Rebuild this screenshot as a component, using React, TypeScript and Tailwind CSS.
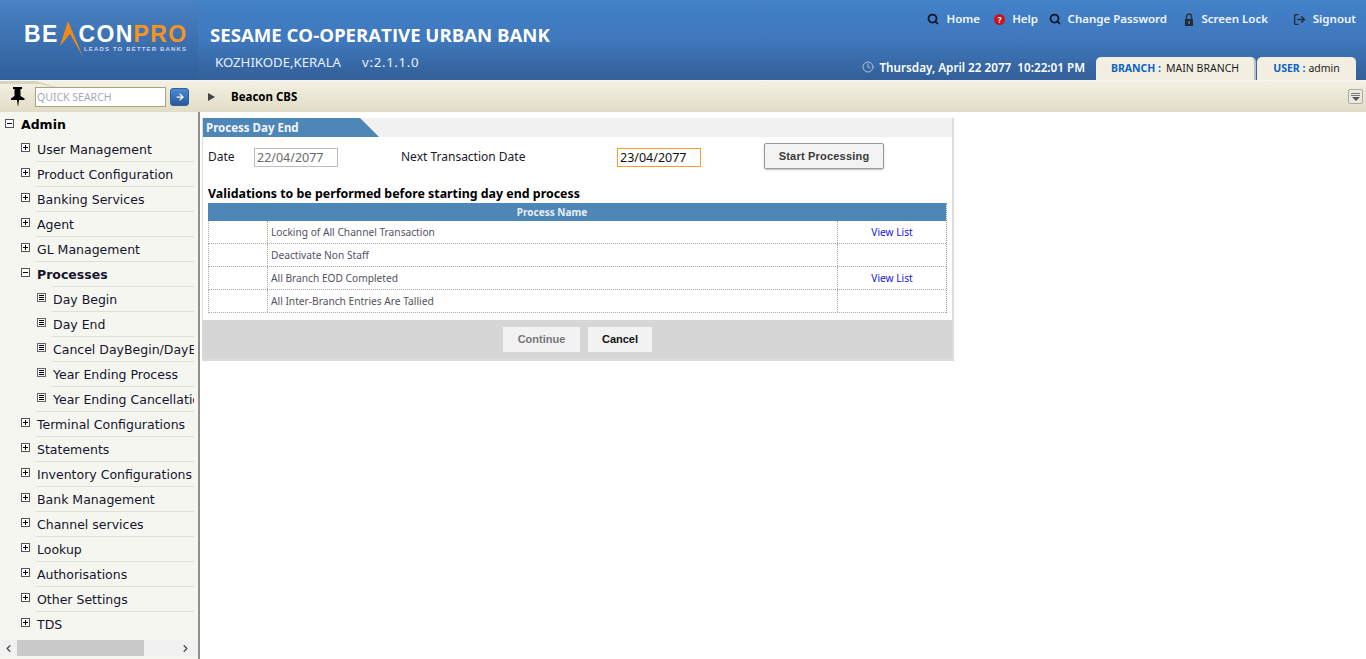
import React from 'react';
import { Search, LogOut, Clock, ArrowRight, ChevronLeft, ChevronRight } from 'lucide-react';

const tahoma = 'font-["Noto_Sans","DejaVu_Sans",sans-serif]';

const links = [
  { label: 'Home', icon: 'search', w: 'w-[66px]' },
  { label: 'Help', icon: 'help', w: 'w-[58px]' },
  { label: 'Change Password', icon: 'search', w: 'w-[129px]' },
  { label: 'Screen Lock', icon: 'lock', w: 'w-[101px]' },
  { label: 'Signout', icon: 'out', w: 'w-[88px]' },
];

const menu = [
  { label: 'User Management' },
  { label: 'Product Configuration' },
  { label: 'Banking Services' },
  { label: 'Agent' },
  { label: 'GL Management' },
  { label: 'Processes', open: true },
  { label: 'Day Begin', leaf: true },
  { label: 'Day End', leaf: true },
  { label: 'Cancel DayBegin/DayEnd', leaf: true },
  { label: 'Year Ending Process', leaf: true },
  { label: 'Year Ending Cancellation', leaf: true },
  { label: 'Terminal Configurations' },
  { label: 'Statements' },
  { label: 'Inventory Configurations' },
  { label: 'Bank Management' },
  { label: 'Channel services' },
  { label: 'Lookup' },
  { label: 'Authorisations' },
  { label: 'Other Settings' },
  { label: 'TDS' },
];

const rows = [
  { name: 'Locking of All Channel Transaction', link: true },
  { name: 'Deactivate Non Staff', link: false },
  { name: 'All Branch EOD Completed', link: true },
  { name: 'All Inter-Branch Entries Are Tallied', link: false },
];

const TreeBox = ({ open }: { open?: boolean }) => (
  <svg width="9" height="9" viewBox="0 0 9 9" className="shrink-0">
    <rect x="0.5" y="0.5" width="8" height="8" fill="#fff" stroke="#555" />
    <path d="M2 4.5h5" stroke="#000" />
    {!open && <path d="M4.5 2v5" stroke="#000" />}
  </svg>
);

const LeafBox = () => (
  <svg width="9" height="9" viewBox="0 0 9 9" className="shrink-0">
    <rect x="0.5" y="0.5" width="8" height="8" fill="#f4f4f4" stroke="#666" />
    <path d="M2 2.5h5M2 4.5h5M2 6.5h5" stroke="#000" />
  </svg>
);

const LockIcon = () => (
  <svg width="10" height="13" viewBox="0 0 10 13">
    <path d="M2.5 6V3.5a2.5 2.5 0 0 1 5 0V6" fill="none" stroke="#2a3340" strokeWidth="1.5" />
    <rect x="1" y="6" width="8" height="7" fill="#222b38" />
    <rect x="4" y="8" width="2" height="3" fill="#5a6a7d" />
  </svg>
);

const PinIcon = () => (
  <svg width="16" height="19" viewBox="0 0 16 19">
    <path d="M3 0h9v2h-1.5v7L14.5 11.5V13H9l-.8 6h-.4L7 13H1v-1.5L4.5 9V2H3z" fill="#000" />
  </svg>
);

const LinkIcon = ({ type }: { type: string }) => {
  if (type === 'help')
    return (
      <span className="w-[11px] h-[11px] rounded-full bg-[#c8141e] text-white text-[8px] font-bold leading-[11px] text-center">?</span>
    );
  if (type === 'lock') return <LockIcon />;
  if (type === 'out') return <LogOut size={13} strokeWidth={2.5} className="text-[#222b38]" />;
  return <Search size={12} strokeWidth={3.5} className="text-[#0c1420]" />;
};

const App = () => {
  return (
    <div className={`w-[1366px] h-[659px] overflow-hidden flex flex-col bg-white ${tahoma}`}>
      {/* top banner */}
      <header className="h-[80px] shrink-0 flex bg-gradient-to-b from-[#4381c9] via-[#3f78bd] to-[#325f98] text-white">
        <div className="w-[198px] shrink-0 bg-gradient-to-b from-[#4a82c5] to-[#2f5f9b] flex items-start pl-[24px] pt-[20px]">
          <div className="relative w-[165px] h-[40px]">
            <span className="font-['Liberation_Sans',sans-serif] font-bold text-[23px] leading-[28px] tracking-[1.3px] whitespace-nowrap">
              BE<span className="inline-block w-[20px]" />CON<span className="text-[#f7941d]">PRO</span>
            </span>
            <svg width="26" height="38" viewBox="0 0 26 38" className="absolute left-[34px] top-0">
              <path d="M10 1 L25 37 L12 14 L2 26 Z" fill="#f28a1a" />
            </svg>
            <span className="absolute left-[60px] top-[25px] text-[6px] leading-[8px] tracking-[1.15px] font-bold text-[#c7d7ea] whitespace-nowrap font-['Liberation_Sans',sans-serif]">
              LEADS TO BETTER BANKS
            </span>
          </div>
        </div>
        <div className="flex-1 flex flex-col relative">
          <div className="flex justify-between">
            <div className="pl-[12px] pt-[23px]">
              <h1 className="font-['Open_Sans',sans-serif] font-bold text-[18.6px] leading-[24px] whitespace-nowrap">SESAME CO-OPERATIVE URBAN BANK</h1>
              <div className="pl-[5px] pt-[6px] flex gap-[21px] text-[13.2px] leading-[18px] text-[#e6f2ff]">
                <span>KOZHIKODE,KERALA</span>
                <span className="tracking-[0.7px]">v:2.1.1.0</span>
              </div>
            </div>
            <nav className="flex pt-[11px] pr-[10px] h-fit">
              {links.map((l) => (
                <div key={l.label} className={`${l.w} flex items-center justify-end gap-[7px] text-[11.5px] leading-[16px] font-semibold text-[#f1f6fc] whitespace-nowrap`}>
                  <LinkIcon type={l.icon} />
                  <span>{l.label}</span>
                </div>
              ))}
            </nav>
          </div>
          <div className="absolute right-[10px] bottom-0 flex items-end">
            <div className="flex items-center gap-[5px] mr-[11px] mb-[5px] text-[11.7px] leading-[16px] font-semibold whitespace-nowrap">
              <Clock size={12} className="text-[#a8c4e4]" />
              <span>Thursday, April 22 2077&nbsp; 10:22:01 PM</span>
            </div>
            <div className="w-[160px] h-[23px] bg-[#f2efe2] rounded-t-[5px] flex items-center justify-center gap-[5px] text-[10.5px] text-[#1b1b1b] mr-[1px] border-r-2 border-[#b9c0c8]">
              <b className="text-[#0b63c5] font-bold">BRANCH :</b> MAIN BRANCH
            </div>
            <div className="w-[99px] h-[23px] bg-[#f2efe2] rounded-t-[5px] flex items-center justify-center gap-[3px] text-[10.5px] text-[#1b1b1b]">
              <b className="text-[#0b63c5] font-bold">USER :</b> admin
            </div>
          </div>
        </div>
      </header>

      {/* toolbar */}
      <div className="h-[32px] shrink-0 flex items-center bg-gradient-to-b from-[#f4f1e4] to-[#e1dcc6] border-t border-[#f8f6ee] relative">
        <svg width="90" height="14" viewBox="0 0 90 14" className="absolute left-0 top-0">
          <path d="M0 0h36L70 10 40 3H0z" fill="#d8d3bd" />
        </svg>
        <div className="w-[35px] flex justify-center -mt-[1px] relative">
          <PinIcon />
        </div>
        <div className="w-[131px] h-[20px] bg-white border border-[#a8a27f] flex items-center px-[1px] pt-[2px] text-[10.5px] text-[#a3a9b5] relative">
          QUICK SEARCH
        </div>
        <div className="ml-[4px] w-[19px] h-[18px] rounded-[3px] bg-gradient-to-b from-[#4f8bd0] to-[#245a9c] border border-[#2d5f9c] flex items-center justify-center">
          <ArrowRight size={10} strokeWidth={3} className="text-white" />
        </div>
        <span className="ml-[19px] w-0 h-0 border-y-[4px] border-y-transparent border-l-[7px] border-l-[#444]" />
        <span className="ml-[16px] text-[11.5px] font-bold text-black">Beacon CBS</span>
        <div className="ml-auto mr-[3px] w-[15px] h-[15px] rounded-[2px] border border-[#aaa] bg-[#eceadf] flex flex-col items-center justify-center gap-[1px]">
          <span className="w-[9px] h-px bg-[#777]" />
          <span className="w-[9px] h-px bg-[#777]" />
          <span className="w-0 h-0 border-x-[4px] border-x-transparent border-t-[4px] border-t-[#555]" />
        </div>
      </div>

      <div className="flex-1 flex min-h-0">
        {/* side menu */}
        <aside className="w-[200px] shrink-0 bg-[#f6f6f1] border-r-2 border-[#8f8f8f] flex flex-col font-['DejaVu_Sans',sans-serif] text-[12.5px] text-[#14142c] relative">
          <div className="h-[25px] flex items-start pl-[5px] pt-[5px] gap-[7px] font-bold text-[#000] mr-[3px]">
            <span className="mt-[2px]"><TreeBox open /></span>
            <div className="flex-1 leading-[16px]">Admin</div>
          </div>
          <ul className="flex-1 min-h-0 overflow-hidden">
            {menu.map((m) => (
              <li key={m.label} className={`h-[25px] flex ${m.leaf ? 'pl-[37px]' : 'pl-[21px]'}`}>
                <span className="mt-[6px]">
                  {m.leaf ? <LeafBox /> : <TreeBox open={m.open} />}
                </span>
                <div className={`ml-[6px] w-full mr-[4px] border-t border-[#dfdfd8] pt-[4px] pl-[1px] -mt-px h-[26px] leading-[17px] overflow-hidden whitespace-nowrap ${m.open ? 'font-bold' : ''}`}>
                  {m.label}
                </div>
              </li>
            ))}
          </ul>
          <div className="absolute left-0 right-0 bottom-[3px] h-[16px] flex items-center bg-[#f1f1f1]">
            <span className="w-[17px] flex justify-center"><ChevronLeft size={11} strokeWidth={3} className="text-[#505050]" /></span>
            <span className="w-[127px] h-[16px] bg-[#c9c9c9]" />
            <span className="ml-auto w-[17px] mr-[4px] flex justify-center"><ChevronRight size={11} strokeWidth={3} className="text-[#505050]" /></span>
          </div>
        </aside>

        {/* content */}
        <main className="flex-1 pl-[2px] pt-[6px]">
          <section className="w-[752px] border-r-2 border-b-2 border-l border-[#dcdcdc]">
            <div className="h-[19px] bg-[#f1f1f1] flex">
              <div className="w-[176px] h-[19px] bg-[#4f86b8] [clip-path:polygon(0_0,157px_0,100%_100%,0_100%)] pl-[3px] text-[11.5px] leading-[20px] font-bold text-[#f2f6fa]">
                Process Day End
              </div>
            </div>
            <div className="h-[39px] pt-[1px] flex items-center pl-[5px] text-[12px] text-[#1a1a2a]">
              <span className="w-[46px]">Date</span>
              <span className="w-[84px] h-[19px] border border-[#bdbdbd] px-[2px] leading-[17px] text-[#6b6b6b] text-[12.5px]">22/04/2077</span>
              <span className="ml-[63px] w-[216px]">Next Transaction Date</span>
              <span className="w-[84px] h-[19px] border border-[#f59a33] px-[2px] leading-[17px] text-[12.5px] text-[#111]">23/04/2077</span>
              <button className="ml-[63px] w-[120px] h-[26px] -mt-[2px] rounded-[2px] border border-[#9a9a9a] bg-[#f3f3f3] shadow-[0_1px_2px_rgba(0,0,0,0.25)] font-['Liberation_Sans',sans-serif] font-bold text-[11px] text-[#3a3a3a] tracking-[0.2px]">
                Start Processing
              </button>
            </div>
            <h2 className="pl-[5px] pt-[9px] text-[12.4px] leading-[17px] font-bold text-black whitespace-nowrap">
              Validations to be performed before starting day end process
            </h2>
            <div className="ml-[5px] mr-[5px] mt-[1px] border-r border-dotted border-[#999]">
              <div className="h-[18px] bg-[#4f86b8] pr-[50px] text-center text-[10px] leading-[19px] font-bold text-[#e6eef6]">Process Name</div>
              {rows.map((r) => (
                <div key={r.name} className="h-[23px] flex border-b border-l border-dotted border-[#aaa] text-[10.2px] leading-[22px] text-[#52525f]">
                  <div className="w-[59px] border-r border-dotted border-[#aaa]" />
                  <div className="w-[570px] pl-[3px] border-r border-dotted border-[#aaa] whitespace-nowrap">{r.name}</div>
                  <div className="flex-1 text-center text-[#1414e6]">{r.link ? 'View List' : ''}</div>
                </div>
              ))}
            </div>
            <div className="mt-[7px] h-[39px] bg-[#d6d6d6] flex items-center justify-center gap-[8px] font-['Liberation_Sans',sans-serif] font-bold text-[11px]">
              <button className="w-[77px] h-[25px] bg-[#f2f2f2] text-[#777]">Continue</button>
              <button className="w-[64px] h-[25px] bg-[#f2f2f2] text-[#111]">Cancel</button>
            </div>
          </section>
        </main>
      </div>
    </div>
  );
};

export default App;
